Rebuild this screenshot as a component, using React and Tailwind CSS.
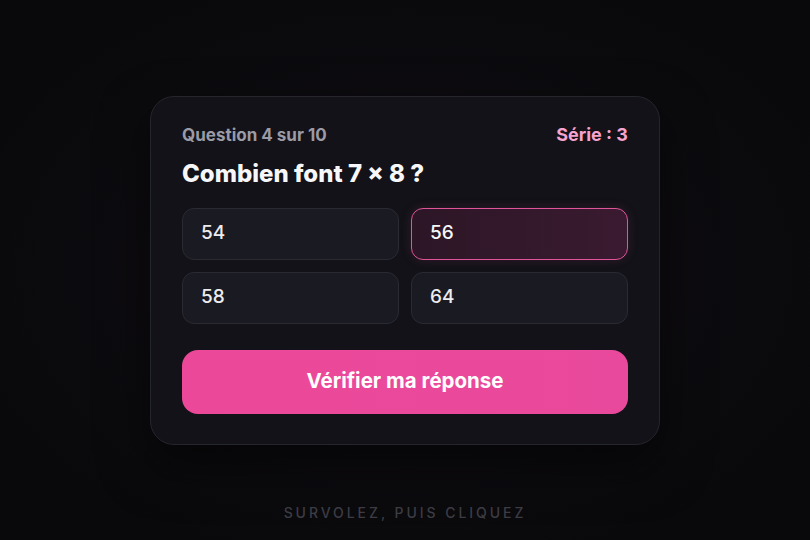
import React from "react";

const options = [
  { v: "54", selected: false },
  { v: "56", selected: true },
  { v: "58", selected: false },
  { v: "64", selected: false },
];

export default function App() {
  return (
    <div
      className="grid h-screen w-full grid-rows-[1fr_auto_1fr] bg-[radial-gradient(ellipse_at_center,#170e14_0%,#0d0b0f_45%,#09090b_80%)]"
      style={{ fontFamily: "Inter, 'Noto Sans', sans-serif" }}
    >
      <div />
      <div className="flex justify-center">
        <div className="w-[510px] rounded-[24px] border border-[#25252d] bg-[#121218] px-[31px] pt-[28px] pb-[30px] shadow-[0_20px_50px_rgba(0,0,0,0.55)]">
          <div className="flex items-center justify-between leading-5">
            <span className="text-[17px] font-bold text-[#9b9ba6]">Question 4 sur 10</span>
            <span className="text-[18px] font-bold text-[#f6a3cf]">Série : 3</span>
          </div>
          <h1 className="mt-[15px] text-[24px] leading-7 font-extrabold text-[#f7f7fa]">
            Combien font 7 × 8 ?
          </h1>
          <div className="mt-5 grid grid-cols-2 gap-3">
            {options.map((o) =>
              o.selected ? (
                <button
                  key={o.v}
                  className="flex h-[52px] items-center rounded-[12px] border border-[#e0559a] bg-[linear-gradient(90deg,#2c1626,#3a1a30)] pl-[18px] text-left text-[19px] font-medium text-[#f7f7f9] shadow-[0_0_12px_rgba(236,72,153,0.15)]"
                >
                  {o.v}
                </button>
              ) : (
                <button
                  key={o.v}
                  className="flex h-[52px] items-center rounded-[12px] border border-[#2a2a33] bg-[#1a1a22] pl-[18px] text-left text-[19px] font-medium text-[#ececf0]"
                >
                  {o.v}
                </button>
              )
            )}
          </div>
          <button className="mt-[26px] flex h-[64px] w-full items-center justify-center rounded-[16px] bg-[linear-gradient(90deg,#ec4899,#e9499c)] text-[20.5px] font-bold text-white">
            Vérifier ma réponse
          </button>
        </div>
      </div>
      <div className="flex items-end justify-center pb-[17px]">
        <span className="text-[14px] leading-5 font-medium tracking-[0.21em] text-[#3c3c44]">
          SURVOLEZ, PUIS CLIQUEZ
        </span>
      </div>
    </div>
  );
}
